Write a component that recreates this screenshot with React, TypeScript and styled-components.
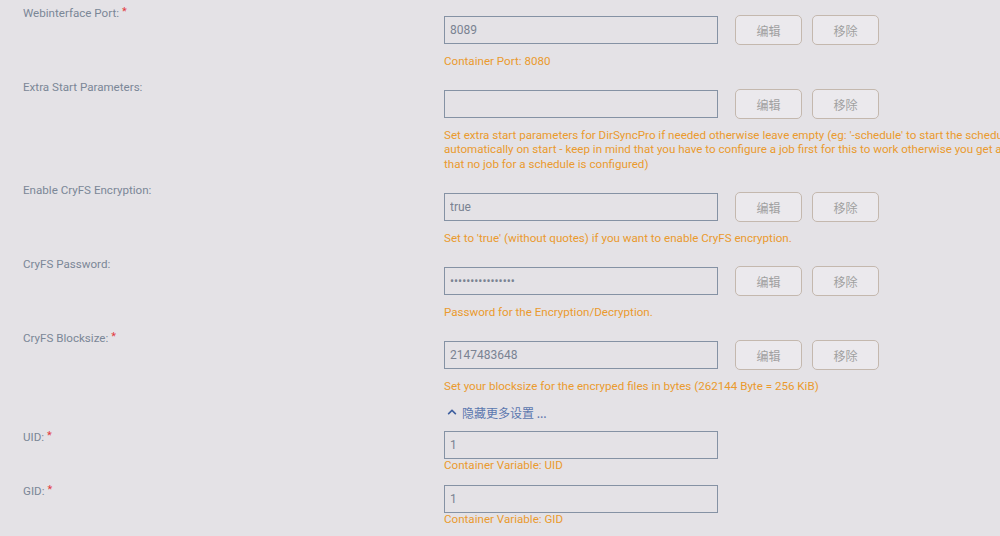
import React from "react";
import styled, { createGlobalStyle } from "styled-components";
import { FaChevronUp } from "react-icons/fa";

const Global = createGlobalStyle`
  html, body { margin: 0; padding: 0; background: #e4e2e6; overflow: hidden; }
  body { font-family: Roboto, "Noto Sans", "Noto Sans CJK SC", sans-serif; }
`;

const Page = styled.div`
  width: 1000px;
  height: 536px;
  box-sizing: border-box;
  padding: 5.5px 0 0 23px;
  background: #e4e2e6;
  overflow: hidden;
`;

const Row = styled.div`
  display: grid;
  grid-template-columns: 421px 1fr;
  margin-bottom: 11.5px;
`;

const Label = styled.div`
  font-size: 11.6px;
  line-height: 15px;
  color: #7b8797;
  white-space: nowrap;
`;

const Star = styled.span`
  color: #e23a3f;
  font-size: 11px;
  margin-left: 3px;
  position: relative;
  top: -2px;
`;

const Content = styled.div<{ $compact?: boolean }>`
  display: flex;
  flex-direction: column;
  margin-top: ${(p) => (p.$compact ? "1.5px" : "9.5px")};
`;

const Controls = styled.div<{ $compact?: boolean }>`
  display: flex;
  align-items: center;
  height: ${(p) => (p.$compact ? "28px" : "30px")};
`;

const Input = styled.input`
  box-sizing: border-box;
  width: 274px;
  height: 28px;
  margin: 0 17px 0 0;
  padding: 0 5px;
  border: 1px solid #8592a4;
  border-radius: 0;
  background: #e4e2e6;
  color: #7a8392;
  font-family: Roboto, "Noto Sans", sans-serif;
  font-size: 12px;
  outline: none;
`;

const Button = styled.button`
  box-sizing: border-box;
  width: 67px;
  height: 30px;
  margin-right: 10px;
  padding: 0;
  border: 1px solid #c4b8ae;
  border-radius: 5px;
  background: #ebe9ed;
  color: #a0a0a0;
  font-family: "Noto Sans CJK SC", sans-serif;
  font-size: 12px;
  cursor: pointer;
`;

const Help = styled.div<{ $compact?: boolean }>`
  margin-top: ${(p) => (p.$compact ? "-1.25px" : "8.5px")};
  font-size: 11.6px;
  line-height: 14.5px;
  color: #ea9a2e;
  white-space: nowrap;
`;

const HelpLine = styled.div`
  display: block;
`;

const Toggle = styled.div`
  margin: 1px 0 10px 424px;
  display: flex;
  align-items: center;
  gap: 5px;
  height: 15px;
  font-family: "Noto Sans CJK SC", sans-serif;
  font-size: 12px;
  color: #5b77ae;
  svg { color: #3f5f9f; width: 10px; height: 10px; }
`;

type Field = {
  label: string;
  required?: boolean;
  value: string;
  password?: boolean;
  help: string[];
  compact?: boolean;
};

const fields: Field[] = [
  { label: "Webinterface Port:", required: true, value: "8089", help: ["Container Port: 8080"] },
  {
    label: "Extra Start Parameters:",
    value: "",
    help: [
      "Set extra start parameters for DirSyncPro if needed otherwise leave empty (eg: '-schedule' to start the schedule",
      "automatically on start - keep in mind that you have to configure a job first for this to work otherwise you get an error",
      "that no job for a schedule is configured)",
    ],
  },
  { label: "Enable CryFS Encryption:", value: "true", help: ["Set to 'true' (without quotes) if you want to enable CryFS encryption."] },
  { label: "CryFS Password:", value: "passwordpassword", password: true, help: ["Password for the Encryption/Decryption."] },
  { label: "CryFS Blocksize:", required: true, value: "2147483648", help: ["Set your blocksize for the encryped files in bytes (262144 Byte = 256 KiB)"] },
];

const advanced: Field[] = [
  { label: "UID:", required: true, value: "1", help: ["Container Variable: UID"], compact: true },
  { label: "GID:", required: true, value: "1", help: ["Container Variable: GID"], compact: true },
];

function FieldRow({ f }: { f: Field }) {
  return (
    <Row>
      <Label>
        {f.label}
        {f.required && <Star>*</Star>}
      </Label>
      <Content $compact={f.compact}>
        <Controls $compact={f.compact}>
          <Input type={f.password ? "password" : "text"} defaultValue={f.value} />
          {!f.compact && (
            <>
              <Button>编辑</Button>
              <Button>移除</Button>
            </>
          )}
        </Controls>
        <Help $compact={f.compact}>
          {f.help.map((h, i) => (
            <HelpLine key={i}>{h}</HelpLine>
          ))}
        </Help>
      </Content>
    </Row>
  );
}

export default function App() {
  return (
    <>
      <Global />
      <Page>
        {fields.map((f) => (
          <FieldRow key={f.label} f={f} />
        ))}
        <Toggle>
          <FaChevronUp />
          <span>隐藏更多设置 ...</span>
        </Toggle>
        {advanced.map((f) => (
          <FieldRow key={f.label} f={f} />
        ))}
      </Page>
    </>
  );
}
